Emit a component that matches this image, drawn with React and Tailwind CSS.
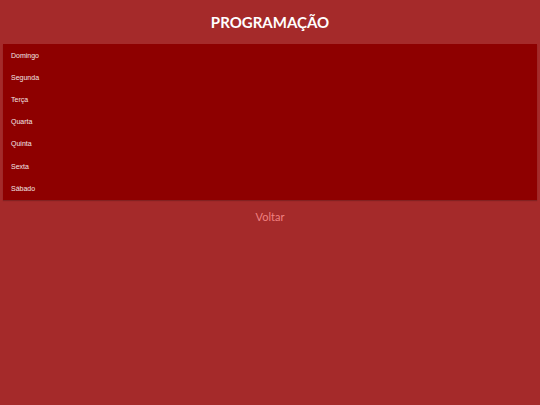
const DAYS = ["Domingo", "Segunda", "Terça", "Quarta", "Quinta", "Sexta", "Sábado"];

export default function App() {
  return (
    <div className="min-h-[405px] w-[540px] bg-[#a52a2a]" style={{ fontFamily: "Lato, 'Liberation Sans', sans-serif" }}>
      {/* Header */}
      <div className="h-[44px] flex items-center justify-center">
        <h1 className="text-white text-[15px] font-bold leading-none">PROGRAMAÇÃO</h1>
      </div>

      {/* Days list */}
      <div className="mx-[3px] bg-[#8e0000] pt-[1px] shadow-[0_1px_1px_rgba(0,0,0,0.2)]">
        {DAYS.map(d => (
          <div key={d} className="h-[22.15px] flex items-center pl-[8px] text-[7px] text-[#f2e6e6]"
            style={{ fontFamily: "'Liberation Sans', Arial, sans-serif" }}>
            {d}
          </div>
        ))}
      </div>

      {/* Back */}
      <div className="flex justify-center pt-[11px]">
        <span className="text-[#f08080] text-[11px] leading-none cursor-pointer">Voltar</span>
      </div>
    </div>
  );
}
